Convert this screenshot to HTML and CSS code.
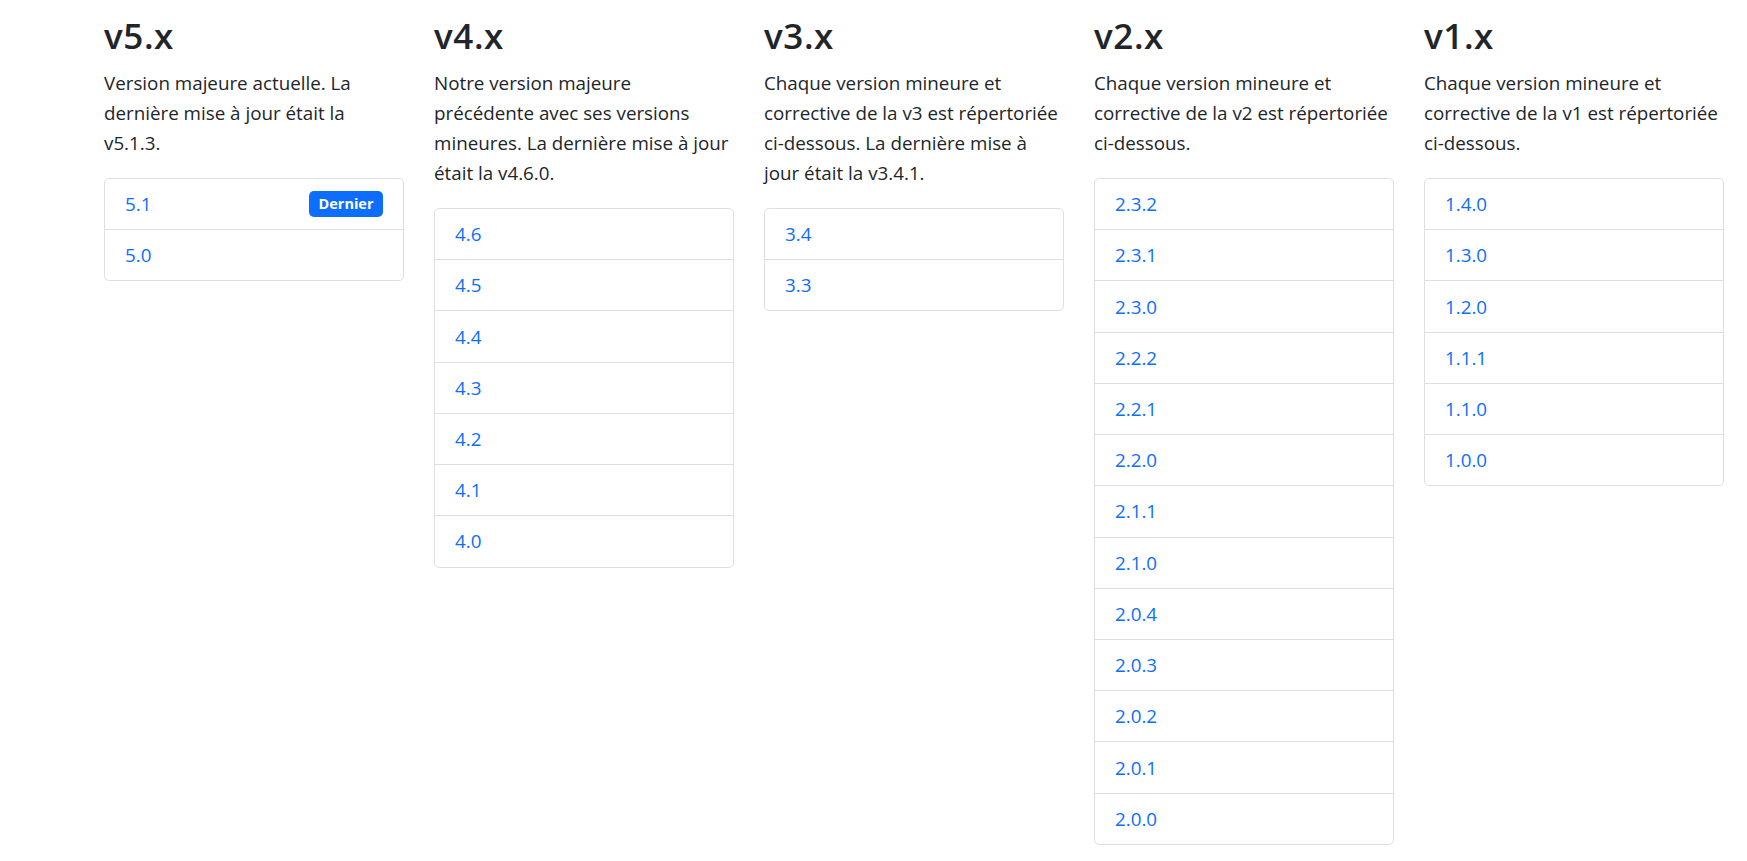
FILE: index.html
```html
<!DOCTYPE html>
<html lang="fr">
<head>
<meta charset="utf-8">
<title>Versions</title>
<link rel="stylesheet" href="styles.css">
</head>
<body>
<main class="versions">
  <section class="version-col">
    <h3 class="version-title">v5.x</h3>
    <p class="version-desc">Version majeure actuelle. La<br>dernière mise à jour était la<br>v5.1.3.</p>
    <div class="list-group">
      <a class="list-item" href="#">5.1 <span class="badge">Dernier</span></a>
      <a class="list-item" href="#">5.0</a>
    </div>
  </section>
  <section class="version-col">
    <h3 class="version-title">v4.x</h3>
    <p class="version-desc">Notre version majeure<br>précédente avec ses versions<br>mineures. La dernière mise à jour<br>était la v4.6.0.</p>
    <div class="list-group">
      <a class="list-item" href="#">4.6</a>
      <a class="list-item" href="#">4.5</a>
      <a class="list-item" href="#">4.4</a>
      <a class="list-item" href="#">4.3</a>
      <a class="list-item" href="#">4.2</a>
      <a class="list-item" href="#">4.1</a>
      <a class="list-item" href="#">4.0</a>
    </div>
  </section>
  <section class="version-col">
    <h3 class="version-title">v3.x</h3>
    <p class="version-desc">Chaque version mineure et<br>corrective de la v3 est répertoriée<br>ci-dessous. La dernière mise à<br>jour était la v3.4.1.</p>
    <div class="list-group">
      <a class="list-item" href="#">3.4</a>
      <a class="list-item" href="#">3.3</a>
    </div>
  </section>
  <section class="version-col">
    <h3 class="version-title">v2.x</h3>
    <p class="version-desc">Chaque version mineure et<br>corrective de la v2 est répertoriée<br>ci-dessous.</p>
    <div class="list-group">
      <a class="list-item" href="#">2.3.2</a>
      <a class="list-item" href="#">2.3.1</a>
      <a class="list-item" href="#">2.3.0</a>
      <a class="list-item" href="#">2.2.2</a>
      <a class="list-item" href="#">2.2.1</a>
      <a class="list-item" href="#">2.2.0</a>
      <a class="list-item" href="#">2.1.1</a>
      <a class="list-item" href="#">2.1.0</a>
      <a class="list-item" href="#">2.0.4</a>
      <a class="list-item" href="#">2.0.3</a>
      <a class="list-item" href="#">2.0.2</a>
      <a class="list-item" href="#">2.0.1</a>
      <a class="list-item" href="#">2.0.0</a>
    </div>
  </section>
  <section class="version-col">
    <h3 class="version-title">v1.x</h3>
    <p class="version-desc">Chaque version mineure et<br>corrective de la v1 est répertoriée<br>ci-dessous.</p>
    <div class="list-group">
      <a class="list-item" href="#">1.4.0</a>
      <a class="list-item" href="#">1.3.0</a>
      <a class="list-item" href="#">1.2.0</a>
      <a class="list-item" href="#">1.1.1</a>
      <a class="list-item" href="#">1.1.0</a>
      <a class="list-item" href="#">1.0.0</a>
    </div>
  </section>
</main>
</body>
</html>
```

FILE: styles.css
```css
* { box-sizing: border-box; }

html, body {
  margin: 0;
  background: #fff;
}

body {
  font-family: "Open Sans", "Noto Sans", sans-serif;
  font-size: 18.8px;
  line-height: 30px;
  color: #212529;
}

.versions {
  display: grid;
  grid-template-columns: repeat(5, 300px);
  column-gap: 30px;
  align-items: start;
  padding: 15px 0 0 104px;
}

.version-title {
  margin: 0 0 10px;
  font-size: 35px;
  line-height: 42px;
  font-weight: 600;
  letter-spacing: 0.6px;
  color: #212529;
}

.version-desc {
  margin: 0 0 20px;
  padding-top: 1px;
  white-space: nowrap;
}

.list-group {
  display: flex;
  flex-direction: column;
  border: 1px solid #dfdfdf;
  border-radius: 5px;
  overflow: hidden;
}

.list-item {
  display: flex;
  justify-content: space-between;
  align-items: center;
  padding: 10.12px 20px;
  line-height: 30px;
  color: #0d6efd;
  text-decoration: none;
}

.list-item + .list-item {
  border-top: 1px solid #dfdfdf;
}

.badge {
  display: inline-block;
  padding: 0 9.5px;
  height: 25.5px;
  line-height: 25.5px;
  font-size: 14.5px;
  font-weight: 700;
  color: #fff;
  background: #0d6efd;
  border-radius: 5px;
}
```
